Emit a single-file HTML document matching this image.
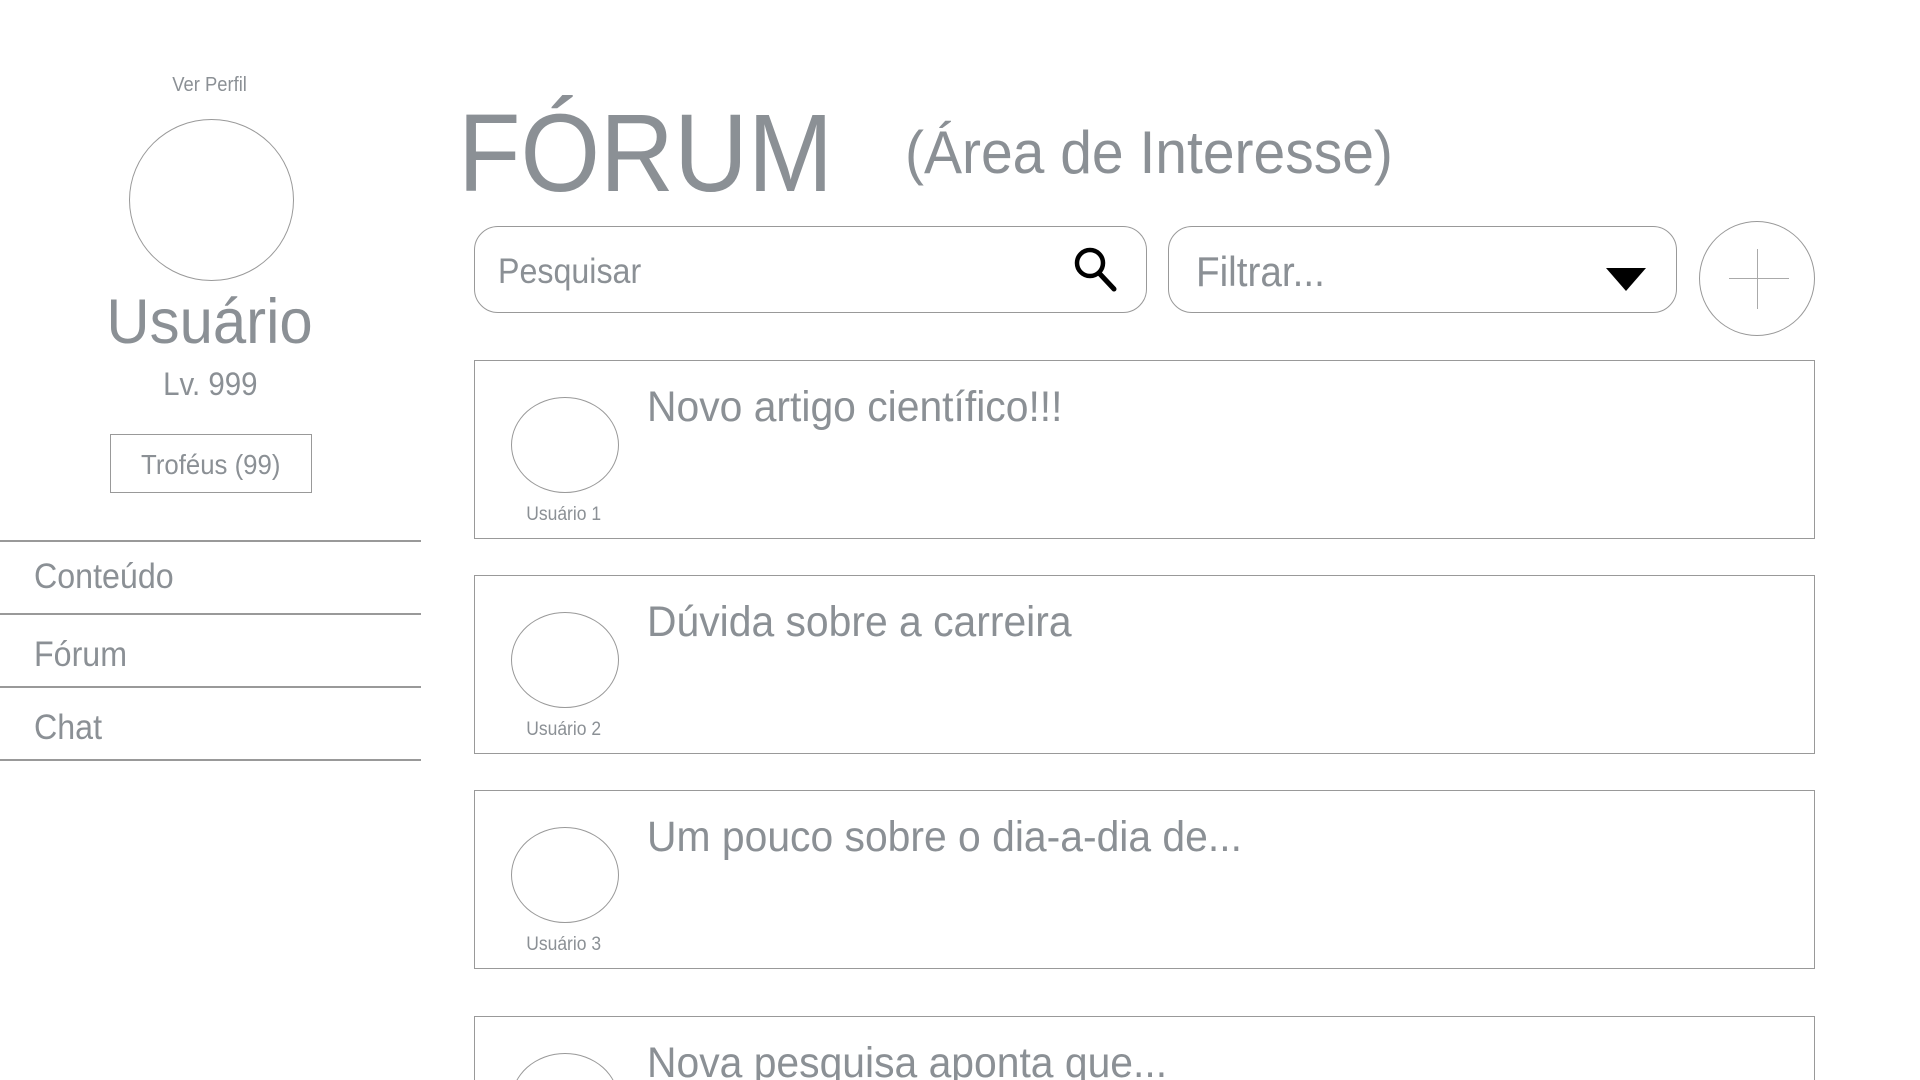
<!DOCTYPE html>
<html><head><meta charset="utf-8"><style>
html,body{margin:0;padding:0;background:#fff;width:1920px;height:1080px;overflow:hidden;position:relative;font-family:"Liberation Sans",sans-serif;color:#8b9095}
.a{position:absolute;white-space:nowrap}
.t{display:inline-block;transform:scaleX(.92);transform-origin:left center}
.c{display:inline-block;transform:scaleX(.92);transform-origin:center center}
.line{position:absolute;left:0;width:421px;height:0;border-top:2px solid #999}
.card{position:absolute;left:474px;width:1339px;height:177px;border:1.5px solid #999;background:#fff}
.av{position:absolute;left:36px;top:36px;width:106px;height:94px;border:1px solid #999;border-radius:50%}
.ul{position:absolute;left:0;width:178px;top:143px;text-align:center;font-size:19px}
.ttl{position:absolute;left:172px;top:22px;font-size:43px;white-space:nowrap}
.ttl .t{transform:scaleX(.95)}
</style></head><body>
<div class="a" style="left:110px;width:200px;top:74px;text-align:center;font-size:20px"><span class="c">Ver Perfil</span></div>
<div class="a" style="left:129px;top:119px;width:163px;height:160px;border:1px solid #999;border-radius:50%"></div>
<div class="a" style="left:60px;width:300px;top:286px;text-align:center;font-size:63px;line-height:72px"><span class="c" style="transform:scaleX(.95)">Usuário</span></div>
<div class="a" style="left:60px;width:300px;top:364px;text-align:center;font-size:32px;line-height:40px"><span class="c">Lv. 999</span></div>
<div class="a" style="left:110px;top:434px;width:200px;height:57px;border:1px solid #999;text-align:center;font-size:28px;line-height:60px"><span class="c">Troféus (99)</span></div>
<div class="line" style="top:540px"></div>
<div class="line" style="top:613px"></div>
<div class="line" style="top:686px"></div>
<div class="line" style="top:759px"></div>
<div class="a" style="left:34px;top:556px;font-size:35px;line-height:42px"><span class="t">Conteúdo</span></div>
<div class="a" style="left:34px;top:634px;font-size:35px;line-height:42px"><span class="t">Fórum</span></div>
<div class="a" style="left:34px;top:707px;font-size:35px;line-height:42px"><span class="t">Chat</span></div>

<div class="a" style="left:458px;top:94px;font-size:110px;line-height:120px"><span class="t" style="transform:scaleX(.93)">FÓRUM</span></div>
<div class="a" style="left:905px;top:118px;font-size:60px;line-height:70px"><span class="t" style="transform:scaleX(.95)">(Área de Interesse)</span></div>

<div class="a" style="left:474px;top:226px;width:671px;height:85px;border:1.5px solid #999;border-radius:24px"></div>
<div class="a" style="left:498px;top:251px;font-size:35px;line-height:42px"><span class="t">Pesquisar</span></div>
<svg class="a" style="left:1070px;top:245px" width="52" height="50" viewBox="0 0 52 50"><circle cx="20" cy="18" r="13" fill="none" stroke="#000" stroke-width="4.5"/><line x1="29" y1="28" x2="44" y2="44" stroke="#000" stroke-width="5" stroke-linecap="round"/></svg>

<div class="a" style="left:1168px;top:226px;width:507px;height:85px;border:1.5px solid #999;border-radius:24px"></div>
<div class="a" style="left:1196px;top:247px;font-size:42px;line-height:50px"><span class="t">Filtrar...</span></div>
<svg class="a" style="left:1606px;top:268px" width="40" height="24"><polygon points="0,0 40,0 20,23" fill="#000"/></svg>

<div class="a" style="left:1699px;top:221px;width:114px;height:113px;border:1px solid #999;border-radius:50%"></div>
<div class="a" style="left:1729px;top:278px;width:60px;height:1px;background:#aaa"></div>
<div class="a" style="left:1757px;top:249px;width:1px;height:60px;background:#aaa"></div>

<div class="card" style="top:360px"><div class="av"></div><div class="ul"><span class="c">Usuário 1</span></div><div class="ttl"><span class="t">Novo artigo científico!!!</span></div></div>
<div class="card" style="top:575px"><div class="av"></div><div class="ul"><span class="c">Usuário 2</span></div><div class="ttl"><span class="t">Dúvida sobre a carreira</span></div></div>
<div class="card" style="top:790px"><div class="av"></div><div class="ul"><span class="c">Usuário 3</span></div><div class="ttl"><span class="t">Um pouco sobre o dia-a-dia de...</span></div></div>
<div class="card" style="top:1016px;height:64px;overflow:hidden;border-bottom:none"><div class="av"></div><div class="ttl"><span class="t">Nova pesquisa aponta que...</span></div></div>
</body></html>
